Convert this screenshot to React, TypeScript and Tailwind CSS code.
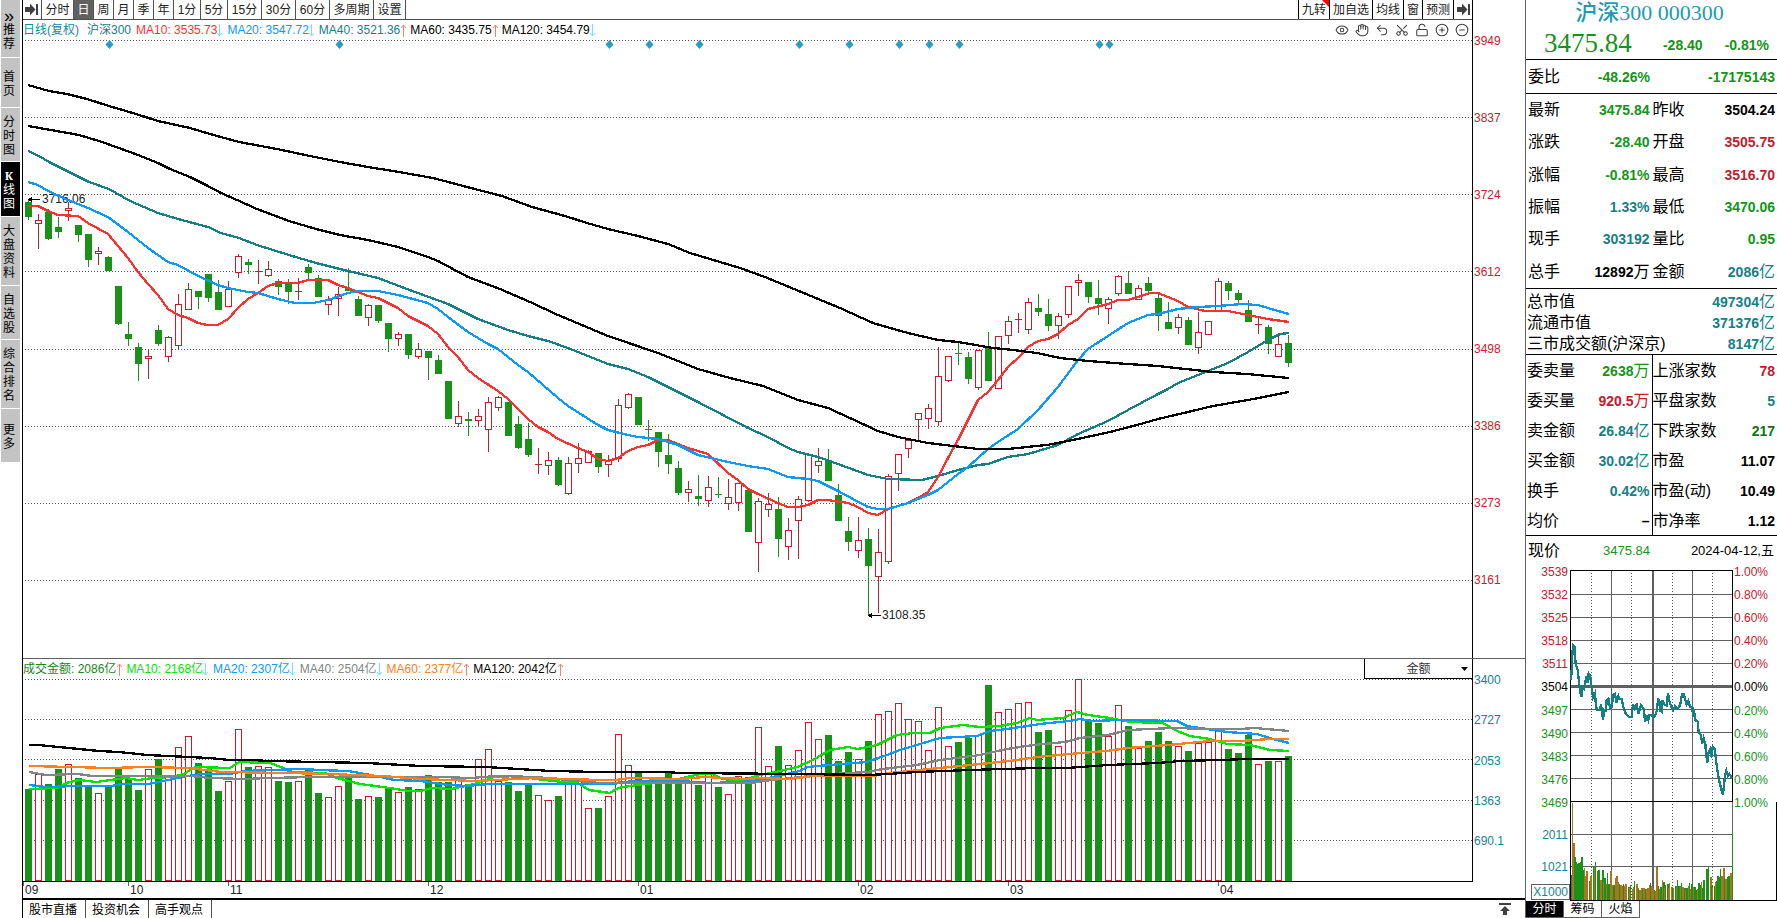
import React from "react";
import { CircleMinus, CirclePlus, Eye, Hand, LockOpen, Scissors, Undo2 } from "lucide-react";

type Candle = [kind: "g" | "r", top: number, bottom: number, high: number, low: number];
type Pt = [number, number];

const GREEN = "#1a921a";
const RED = "#c0202c";

const x0 = 28;
const step = 10;

const candles: Candle[] = [
  ["g", 202, 217, 200, 220], ["r", 220, 224, 214, 249], ["g", 212, 239, 209, 240], ["g", 227, 232, 217, 238],
  ["r", 208, 211, 202, 221], ["g", 225, 235, 225, 242], ["g", 234, 260, 234, 267], ["r", 251, 254, 247, 265],
  ["g", 257, 271, 256, 271], ["g", 286, 324, 286, 325], ["g", 334, 339, 322, 346], ["g", 347, 364, 343, 381],
  ["r", 356, 359, 350, 379], ["g", 330, 344, 325, 346], ["r", 337, 357, 336, 362], ["r", 304, 346, 294, 350],
  ["r", 289, 310, 283, 310], ["g", 291, 297, 291, 309], ["g", 274, 298, 274, 302], ["g", 292, 310, 280, 310],
  ["r", 289, 307, 281, 307], ["r", 256, 273, 254, 278], ["g", 262, 265, 259, 274], ["r", 271, 272, 260, 284],
  ["r", 269, 276, 261, 277], ["g", 281, 287, 279, 295], ["g", 283, 292, 279, 304], ["r", 291, 292, 278, 300],
  ["g", 267, 273, 264, 280], ["g", 278, 297, 275, 297], ["r", 300, 305, 296, 315], ["r", 294, 299, 287, 316],
  ["g", 288, 291, 268, 291], ["g", 299, 316, 296, 316], ["r", 305, 318, 304, 326], ["g", 305, 321, 305, 323],
  ["g", 323, 339, 323, 352], ["r", 334, 339, 332, 346], ["g", 334, 355, 334, 359], ["r", 349, 357, 343, 359],
  ["g", 351, 358, 351, 380], ["g", 360, 374, 355, 374], ["g", 381, 419, 381, 419], ["r", 416, 424, 401, 427],
  ["g", 419, 421, 412, 436], ["r", 416, 421, 409, 427], ["r", 402, 430, 397, 452], ["r", 397, 408, 396, 411],
  ["g", 402, 436, 402, 436], ["g", 424, 448, 416, 449], ["g", 439, 455, 423, 457], ["r", 464, 465, 448, 474],
  ["r", 460, 466, 452, 475], ["g", 460, 485, 457, 486], ["r", 463, 494, 457, 495], ["r", 458, 464, 443, 473],
  ["r", 451, 463, 450, 463], ["g", 453, 467, 453, 473], ["r", 460, 465, 455, 477], ["r", 405, 459, 399, 462],
  ["r", 394, 408, 393, 409], ["g", 397, 425, 397, 425], ["g", 429, 430, 420, 441], ["g", 432, 452, 432, 467],
  ["g", 455, 464, 434, 474], ["g", 468, 493, 461, 495], ["r", 489, 493, 481, 502], ["g", 496, 499, 475, 506],
  ["r", 487, 501, 476, 507], ["g", 494, 495, 477, 498], ["r", 497, 504, 479, 510], ["r", 483, 503, 483, 511],
  ["g", 490, 532, 490, 532], ["r", 501, 543, 498, 572], ["r", 504, 510, 493, 517], ["g", 509, 539, 497, 557],
  ["r", 530, 547, 518, 560], ["r", 499, 521, 496, 559], ["r", 454, 501, 454, 502], ["r", 461, 466, 448, 473],
  ["g", 460, 481, 449, 481], ["g", 495, 521, 484, 521], ["g", 531, 542, 517, 551], ["r", 540, 551, 517, 558],
  ["g", 539, 566, 528, 615], ["r", 552, 577, 529, 613], ["r", 476, 562, 474, 564], ["r", 454, 474, 454, 491],
  ["r", 440, 449, 440, 458], ["r", 413, 420, 413, 440], ["r", 408, 419, 404, 429], ["r", 376, 422, 347, 426],
  ["r", 356, 381, 356, 382], ["g", 353, 354, 343, 365], ["g", 357, 379, 352, 384], ["r", 350, 388, 350, 390],
  ["g", 347, 381, 332, 381], ["r", 336, 389, 336, 389], ["r", 321, 336, 316, 344], ["r", 319, 320, 313, 333],
  ["r", 302, 330, 298, 334], ["g", 308, 312, 294, 316], ["g", 314, 326, 299, 331], ["r", 316, 326, 313, 339],
  ["r", 286, 315, 286, 318], ["r", 280, 283, 274, 296], ["g", 282, 297, 282, 303], ["g", 298, 304, 280, 315],
  ["r", 299, 309, 297, 324], ["r", 276, 294, 275, 296], ["g", 283, 294, 271, 294], ["r", 288, 300, 285, 300],
  ["g", 283, 291, 277, 292], ["g", 298, 316, 294, 331], ["g", 322, 329, 302, 329], ["r", 317, 328, 314, 334],
  ["g", 320, 345, 317, 345], ["r", 332, 348, 312, 354], ["r", 321, 335, 321, 335], ["r", 281, 311, 278, 311],
  ["g", 283, 291, 281, 300], ["g", 293, 300, 290, 304], ["g", 310, 322, 300, 322], ["r", 324, 325, 318, 334],
  ["g", 327, 344, 325, 354], ["r", 344, 357, 333, 357], ["g", 343, 363, 335, 367],
];

const volumeTops: number[] = [
  789, 774, 784, 769, 764, 778, 786, 793, 786, 768, 778, 790, 769, 759, 777, 747, 736, 763, 769, 791,
  781, 729, 767, 766, 767, 781, 782, 781, 769, 793, 797, 786, 775, 799, 796, 797, 787, 792, 787, 789,
  775, 782, 782, 778, 784, 759, 749, 781, 782, 791, 783, 795, 800, 796, 783, 781, 808, 808, 796, 734,
  765, 772, 784, 783, 773, 780, 778, 785, 774, 787, 794, 776, 777, 727, 766, 746, 765, 750, 722, 739,
  735, 761, 752, 759, 741, 714, 711, 703, 719, 721, 750, 707, 746, 742, 738, 735, 685, 712, 709, 703,
  702, 732, 730, 746, 710, 679, 721, 723, 736, 705, 726, 748, 741, 732, 741, 746, 751, 743, 742, 730,
  749, 753, 735, 764, 761, 761, 756,
];

const priceLines: { color: string; pts: Pt[] }[] = [
  {
    color: "#148086",
    pts: [[28, 151], [39, 156], [49, 162], [67, 171], [89, 182], [109, 189], [130, 201], [158, 213], [178, 219], [208, 227], [221, 233], [239, 238], [257, 245], [289, 255], [316, 263], [348, 271], [378, 278], [407, 289], [448, 304], [478, 319], [508, 330], [528, 336], [548, 341], [568, 348], [608, 364], [628, 369], [648, 377], [668, 387], [698, 402], [748, 428], [768, 437], [788, 448], [798, 452], [818, 457], [838, 464], [868, 475], [888, 479], [922, 480], [938, 476], [958, 470], [978, 465], [988, 464], [1008, 457], [1028, 454], [1058, 445], [1078, 434], [1108, 421], [1128, 410], [1158, 394], [1168, 389], [1178, 383], [1208, 371], [1228, 363], [1248, 352], [1268, 340], [1280, 334], [1289, 333]],
  },
  {
    color: "#ff3030",
    pts: [[28, 206], [38, 206], [48, 211], [58, 215], [78, 216], [88, 223], [108, 234], [118, 246], [128, 258], [138, 272], [148, 284], [158, 295], [168, 309], [178, 315], [188, 318], [198, 323], [207, 325], [218, 325], [228, 319], [238, 308], [248, 299], [258, 293], [268, 286], [278, 283], [298, 283], [308, 280], [328, 280], [338, 285], [348, 288], [368, 296], [378, 298], [398, 308], [408, 316], [428, 326], [438, 334], [448, 347], [458, 357], [468, 370], [478, 378], [498, 391], [508, 399], [528, 419], [538, 427], [548, 432], [558, 439], [578, 448], [588, 452], [598, 459], [608, 461], [618, 458], [628, 451], [638, 447], [648, 445], [658, 440], [668, 440], [688, 448], [698, 451], [708, 454], [728, 473], [738, 480], [748, 489], [758, 494], [778, 503], [788, 507], [798, 507], [808, 505], [818, 500], [828, 500], [848, 503], [858, 507], [868, 513], [878, 515], [888, 509], [898, 506], [908, 503], [918, 498], [928, 492], [938, 477], [948, 458], [958, 440], [968, 420], [978, 400], [988, 392], [998, 380], [1008, 367], [1018, 358], [1028, 347], [1038, 341], [1048, 339], [1058, 334], [1068, 325], [1078, 319], [1088, 309], [1108, 304], [1118, 300], [1128, 300], [1138, 297], [1150, 293], [1158, 293], [1178, 301], [1188, 307], [1205, 311], [1228, 311], [1248, 315], [1268, 319], [1289, 322]],
  },
  {
    color: "#0a99ff",
    pts: [[28, 182], [38, 185], [48, 191], [68, 200], [88, 208], [108, 217], [128, 232], [148, 248], [168, 262], [178, 265], [198, 276], [218, 285], [228, 288], [248, 292], [258, 293], [278, 299], [295, 303], [313, 303], [328, 300], [348, 293], [358, 291], [378, 291], [398, 295], [428, 303], [438, 309], [448, 317], [468, 332], [488, 344], [498, 349], [518, 365], [528, 372], [558, 398], [568, 406], [598, 425], [608, 430], [628, 435], [638, 437], [658, 439], [678, 445], [698, 455], [728, 462], [748, 466], [768, 469], [788, 477], [808, 479], [818, 481], [838, 491], [868, 507], [878, 509], [888, 509], [908, 503], [928, 495], [938, 490], [948, 482], [958, 474], [968, 467], [988, 449], [998, 442], [1018, 429], [1038, 410], [1058, 387], [1078, 360], [1088, 349], [1108, 336], [1128, 323], [1148, 315], [1158, 314], [1178, 309], [1198, 307], [1218, 306], [1242, 304], [1258, 305], [1278, 311], [1289, 314]],
  },
  {
    color: "#000",
    pts: [[28, 126], [51, 130], [79, 135], [99, 141], [119, 148], [138, 155], [158, 163], [170, 169], [190, 177], [206, 185], [221, 193], [237, 200], [257, 209], [289, 221], [316, 229], [340, 235], [368, 240], [398, 247], [428, 257], [438, 261], [468, 277], [500, 289], [530, 302], [558, 315], [608, 336], [658, 353], [698, 369], [730, 378], [763, 386], [798, 400], [828, 408], [850, 418], [878, 431], [898, 437], [928, 443], [953, 446], [978, 449], [1008, 449], [1027, 447], [1047, 445], [1063, 442], [1087, 437], [1110, 432], [1137, 425], [1158, 419], [1188, 412], [1213, 406], [1248, 400], [1289, 392]],
  },
  {
    color: "#000",
    pts: [[28, 85], [49, 91], [67, 94], [87, 99], [109, 106], [136, 114], [158, 121], [190, 128], [210, 134], [239, 142], [277, 149], [310, 156], [340, 162], [368, 167], [399, 172], [433, 178], [467, 187], [502, 196], [532, 207], [565, 216], [587, 223], [608, 229], [638, 236], [668, 244], [690, 253], [740, 268], [765, 277], [840, 308], [873, 323], [890, 328], [908, 333], [938, 340], [958, 342], [993, 348], [1013, 350], [1037, 353], [1060, 358], [1088, 361], [1128, 364], [1158, 366], [1213, 372], [1247, 374], [1289, 378]],
  },
];

const volumeLines: { color: string; pts: Pt[] }[] = [
  {
    color: "#00e400",
    pts: [[29, 789], [57, 788], [69, 782], [80, 780], [96, 782], [126, 778], [138, 780], [153, 778], [172, 777], [184, 774], [195, 767], [230, 768], [239, 762], [270, 763], [281, 767], [291, 772], [325, 773], [337, 778], [360, 784], [383, 787], [409, 791], [421, 791], [432, 788], [452, 789], [478, 783], [494, 777], [517, 776], [536, 779], [563, 782], [578, 783], [589, 790], [610, 793], [618, 788], [643, 784], [667, 782], [687, 777], [700, 774], [712, 774], [723, 779], [740, 781], [760, 775], [780, 771], [797, 767], [813, 760], [830, 750], [848, 747], [858, 749], [877, 745], [897, 735], [913, 733], [930, 733], [940, 728], [963, 725], [980, 727], [1000, 726], [1017, 723], [1030, 718], [1037, 720], [1063, 718], [1077, 712], [1088, 715], [1110, 718], [1130, 722], [1163, 723], [1177, 731], [1190, 736], [1210, 739], [1227, 744], [1250, 745], [1270, 750], [1289, 751]],
  },
  {
    color: "#0a99ff",
    pts: [[29, 785], [46, 787], [77, 786], [111, 786], [122, 784], [149, 784], [168, 780], [188, 776], [203, 774], [230, 774], [245, 771], [268, 770], [306, 769], [318, 770], [348, 771], [371, 775], [394, 780], [421, 781], [448, 785], [467, 786], [490, 784], [615, 784], [620, 782], [643, 781], [680, 781], [710, 783], [740, 782], [760, 780], [777, 776], [800, 771], [807, 767], [830, 765], [867, 762], [887, 755], [900, 750], [920, 744], [940, 738], [977, 736], [990, 731], [1007, 729], [1027, 726], [1040, 724], [1070, 721], [1080, 719], [1093, 721], [1120, 720], [1177, 721], [1187, 726], [1207, 729], [1227, 732], [1257, 734], [1273, 739], [1289, 743]],
  },
  {
    color: "#808686",
    pts: [[29, 772], [46, 775], [78, 774], [92, 776], [191, 776], [210, 778], [245, 779], [268, 778], [314, 777], [440, 777], [471, 778], [497, 776], [536, 777], [600, 783], [643, 783], [753, 783], [763, 781], [800, 777], [833, 774], [867, 772], [883, 769], [917, 765], [940, 760], [980, 755], [1007, 749], [1033, 745], [1065, 742], [1080, 738], [1108, 735], [1128, 730], [1173, 728], [1213, 729], [1240, 729], [1255, 728], [1289, 731]],
  },
  {
    color: "#ff8020",
    pts: [[29, 766], [71, 767], [109, 768], [147, 767], [188, 768], [222, 772], [287, 773], [329, 774], [383, 776], [421, 779], [475, 781], [536, 778], [600, 780], [615, 780], [630, 778], [683, 779], [703, 777], [747, 779], [760, 778], [790, 779], [813, 776], [873, 776], [890, 773], [920, 770], [960, 766], [990, 763], [1017, 760], [1037, 757], [1060, 755], [1080, 753], [1107, 751], [1128, 748], [1168, 745], [1210, 741], [1240, 741], [1270, 739], [1289, 739]],
  },
  {
    color: "#000",
    pts: [[29, 745], [38, 745], [69, 748], [99, 751], [119, 752], [147, 755], [189, 757], [209, 758], [230, 760], [253, 760], [268, 761], [367, 763], [421, 766], [486, 767], [551, 771], [600, 772], [668, 772], [678, 773], [800, 774], [868, 775], [888, 774], [917, 772], [970, 770], [1037, 768], [1067, 768], [1108, 765], [1158, 763], [1180, 761], [1220, 760], [1248, 759], [1289, 759]],
  },
];

// Intraday line, in thirds of a pixel from the panel's origin.
const intraday: Pt[] = [
  [183, 420], [185, 390], [187, 345], [189, 315], [193, 318], [197, 372], [203, 390], [207, 425], [210, 455], [215, 470], [218, 440], [222, 445], [226, 425], [229, 408], [232, 428], [236, 400], [240, 405], [245, 440], [249, 473], [255, 460], [258, 500], [262, 510], [270, 510], [273, 492], [276, 515], [279, 540], [283, 510], [288, 512], [290, 480], [295, 475], [300, 505], [306, 500], [309, 465], [315, 462], [320, 488], [325, 468], [328, 478], [335, 478], [340, 500], [347, 520], [355, 530], [365, 530], [369, 493], [374, 505], [380, 494], [385, 522], [393, 495], [402, 508], [405, 545], [411, 530], [415, 540], [418, 525], [425, 525], [430, 533], [437, 524], [441, 510], [444, 478], [448, 480], [450, 512], [455, 515], [458, 480], [463, 493], [470, 497], [474, 460], [478, 482], [484, 500], [489, 512], [495, 498], [500, 506], [508, 500], [512, 488], [516, 462], [521, 462], [526, 480], [530, 493], [535, 482], [540, 500], [547, 500], [549, 530], [553, 520], [556, 540], [563, 545], [566, 575], [572, 585], [577, 610], [581, 595], [586, 612], [588, 640], [592, 668], [596, 635], [600, 628], [605, 652], [608, 620], [614, 625], [618, 660], [622, 690], [627, 720], [631, 735], [634, 748], [639, 765], [642, 735], [645, 708], [649, 692], [654, 708], [658, 702], [662, 708], [667, 715],
];

const turnover =
  "t25 b97 b57 g43 g38 g36 g37 g38 g43 g30 b32 b24 b29 b20 g19 b24 b25 g34 b33 g38 g29 g30 g28 b20 g30 b18 g22 b16 g27 g16 b29 b16 b15 g15 b22 b24 b18 g16 b15 b14 g16 b14 b16 b15 g13 b12 g15 b11 b13 g19 b16 b12 g11 b10 b12 g10 b12 g11 b10 b12 b15 g17 b14 b11 g10 b9 b33 g14 b11 g13 b20 g18 b12 g15 g16 b12 b17 b13 g12 b12 g14 b13 g20 g14 b14 g17 b13 g12 b10 g12 b14 g17 b11 g16 b13 g13 g10 b11 g17 g15 b18 g12 g20 g18 g31 g20 g34 b23 g14 b12 g14 b18 g19 g24 g23 g31 b24 b32 g22 b21 g23 g24 g24 b27".split(" ");

const fillOf: Record<string, string> = { g: GREEN, b: "#ad7420", t: "#148086" };

const toPoints = (pts: Pt[]) => pts.map((p) => p.join(",")).join(" ");

const Lines = ({ lines }: { lines: { color: string; pts: Pt[] }[] }) => (
  <>
    {lines.map((l, i) => (
      <polyline key={i} points={toPoints(l.pts)} fill="none" stroke={l.color} strokeWidth={2.3} />
    ))}
  </>
);

const Grid = ({ ys }: { ys: number[] }) => (
  <>
    {ys.map((y) => (
      <line key={y} x1={25} x2={1472} y1={y + 0.5} y2={y + 0.5} stroke="#555" strokeDasharray="1 2" />
    ))}
  </>
);

function CandleShape({ c, i }: { c: Candle; i: number }) {
  const [kind, top, bottom, high, low] = c;
  const x = x0 + i * step;
  const color = kind === "g" ? GREEN : RED;
  const flat = bottom - top <= 1;
  return (
    <g fill={color}>
      {high < top && <rect x={x} y={high} width={1} height={top - high} />}
      {low > bottom && <rect x={x} y={bottom} width={1} height={low - bottom} />}
      {kind === "g" || flat ? (
        <rect x={x - 3} y={top} width={7} height={bottom - top} />
      ) : (
        <rect x={x - 2.5} y={top + 0.5} width={6} height={bottom - top - 1} fill="#fff" stroke={color} />
      )}
    </g>
  );
}

function PriceChart() {
  return (
    <svg className="block min-h-0 w-full flex-1" viewBox="23 40 1449 618" preserveAspectRatio="none" shapeRendering="crispEdges">
      <Grid ys={[40, 117, 194, 271, 349, 426, 503, 580]} />
      {candles.map((c, i) => (
        <CandleShape key={i} c={c} i={i} />
      ))}
      <g fontFamily="Liberation Sans, sans-serif" fontSize={12} fill="#222">
        <text x={42} y={203}>3716.06</text>
        <text x={882} y={619}>3108.35</text>
      </g>
      <Lines lines={priceLines} />
      <g fill="#000">
        <path d="M28 199h12v1H28zM28 199.500l4-3v6zM868 615h13v1h-13zM868 615.500l4-3v6z" />
      </g>
      <g fill="#2b9cc8" shapeRendering="auto">
        {[109, 339, 609, 649, 699, 799, 849, 899, 929, 959, 1099, 1109].map((x) => (
          <path key={x} d={`M${x + 0.5} 40l4 4.500-4 4.500-4-4.500z`} />
        ))}
      </g>
    </svg>
  );
}

function VolumeChart() {
  return (
    <svg className="block min-h-0 w-full flex-1" viewBox="23 679 1449 202" preserveAspectRatio="none" shapeRendering="crispEdges">
      <Grid ys={[679, 719, 759, 800, 840]} />
      {volumeTops.map((t, i) => {
        const x = x0 + i * step;
        return candles[i][0] === "g" ? (
          <rect key={i} x={x - 3} y={t} width={7} height={881 - t} fill={GREEN} />
        ) : (
          <rect key={i} x={x - 2.5} y={t + 0.5} width={6} height={880 - t} fill="#fff" stroke={RED} />
        );
      })}
      <Lines lines={volumeLines} />
    </svg>
  );
}

function Intraday() {
  const lx = 1570;
  return (
    <svg className="block h-full min-w-0 flex-1" viewBox="1570 564 163 337" preserveAspectRatio="none" shapeRendering="crispEdges">
      <g fill="#606060">
        {[594, 617, 640, 663, 709, 732, 755, 778, 834, 866].map((y) => (
          <rect key={y} x={lx} y={y} width={163} height={1} />
        ))}
        <rect x={lx} y={685} width={163} height={3} />
        <rect x={1611} y={570} width={1} height={330} />
        <rect x={1652} y={570} width={2} height={330} />
        <rect x={1692} y={570} width={1} height={330} />
        <rect x={1732} y={802} width={1} height={98} />
      </g>
      {[1591, 1631, 1672, 1712].map((x) => (
        <line key={x} x1={x + 0.5} x2={x + 0.5} y1={573} y2={900} stroke="#555" strokeDasharray="1 2" />
      ))}
      {turnover.map((t, i) => {
        const h = Number(t.slice(1));
        return <rect key={i} x={1571 + Math.floor(i * 1.3)} y={900 - h} width={i % 3 === 1 ? 1 : 2} height={h} fill={fillOf[t[0]]} />;
      })}
      <rect x={1732} y={831} width={1} height={68} fill={GREEN} />
      <g fill="#000">
        <rect x={lx} y={570} width={163} height={1} />
        <rect x={lx} y={801} width={163} height={1} />
        <rect x={lx} y={570} width={1} height={331} />
        <rect x={1732} y={570} width={1} height={232} />
        <rect x={lx} y={900} width={163} height={1} />
      </g>
      <polyline points={toPoints(intraday.map(([x, y]) => [1510 + x / 3, 540 + y / 3] as Pt))} fill="none" stroke="#148086" strokeWidth={2.3} />
    </svg>
  );
}

const navItems: [string, string, boolean?][] = [
  ["»推荐", "h-[57px]"],
  ["首页", "h-[49px]"],
  ["分时图", "h-[53px]"],
  ["K线图", "h-[54px]", true],
  ["大盘资料", "h-[68px]"],
  ["自选股", "h-[53px]"],
  ["综合排名", "h-[68px]"],
  ["更多", "h-[53px]"],
];

function SideNav() {
  return (
    <nav className="flex w-[22px] shrink-0 flex-col gap-px pr-[2px] pl-px">
      {navItems.map(([label, height, active]) => (
        <button
          key={label}
          className={`${height} flex flex-col items-center justify-center pt-0.5 pr-[3px] text-xs leading-[14px] ${active ? "bg-black text-white" : "bg-[#c3c3c3] text-black"}`}
        >
          {Array.from(label).map((ch, i) => (
            <span key={i} className={ch === "K" ? "font-serif font-bold" : ch === "»" ? "text-lg leading-[14px]" : ""}>
              {ch}
            </span>
          ))}
        </button>
      ))}
    </nav>
  );
}

const ArrowBar = () => (
  <svg width="13" height="13" viewBox="0 0 13 13" fill="#404040">
    <path d="M0 4h5V0.500l5.500 6-5.500 6V9H0zM11 1h2v11h-2z" />
  </svg>
);

const periods: [string, string][] = [
  ["分时", "w-[32px]"], ["日", "w-5"], ["周", "w-5"], ["月", "w-5"], ["季", "w-5"], ["年", "w-5"], ["1分", "w-[27px]"],
  ["5分", "w-[27px]"], ["15分", "w-[34px]"], ["30分", "w-[34px]"], ["60分", "w-[34px]"], ["多周期", "w-11"], ["设置", "w-8"],
];

const tools: [string, string][] = [
  ["九转", "w-[31px]"], ["加自选", "w-[43px]"], ["均线", "w-[31px]"], ["窗", "w-[19px]"], ["预测", "w-[31px]"],
];

function Toolbar() {
  return (
    <div className="flex h-5 shrink-0 justify-between border-b border-[#505050] text-xs text-[#222]">
      <div className="flex">
        <button aria-label="收起" className="flex w-[18px] items-center justify-end pr-[3px]">
          <ArrowBar />
        </button>
        {periods.map(([label, w]) => (
          <button
            key={label}
            className={`${w} border-l border-[#505050] pt-px text-center whitespace-nowrap last:w-[33px] last:border-r ${label === "日" ? "bg-[#606060] text-white" : ""}`}
          >
            {label}
          </button>
        ))}
      </div>
      <div className="flex">
        {tools.map(([label, w], i) => (
          <button key={label} className={`${w} relative border-l border-black pt-px text-center whitespace-nowrap`}>
            {label}
            {i === 0 && (
              <svg className="absolute top-0 right-0" width="7" height="7" viewBox="0 0 7 7">
                <path d="M0 0h7v7z" fill="#f00" />
              </svg>
            )}
          </button>
        ))}
        <button aria-label="展开" className="flex w-[19px] items-center justify-center border-l border-black">
          <ArrowBar />
        </button>
      </div>
    </div>
  );
}

const Trend = ({ up }: { up: boolean }) => (
  <svg width="6" height="13" viewBox="0 0 6 13" fill="none" stroke={up ? "#ff8068" : "#6ee6f6"} className={up ? "" : "rotate-180"}>
    <path d="M3.500 1v12M1 4l2.500-3L6 4" />
  </svg>
);

const priceLegend: [string, string, boolean][] = [
  ["MA10: 3535.73", "text-[#ff3030]", false],
  ["MA20: 3547.72", "text-[#0a99ff]", false],
  ["MA40: 3521.36", "text-[#148086]", true],
  ["MA60: 3435.75", "text-black", true],
  ["MA120: 3454.79", "text-black", false],
];

const volumeLegend: [string, string, boolean][] = [
  ["成交金额: 2086亿", "text-[#1a851a]", true],
  ["MA10: 2168亿", "text-[#00e400]", false],
  ["MA20: 2307亿", "text-[#0a99ff]", false],
  ["MA40: 2504亿", "text-[#808686]", false],
  ["MA60: 2377亿", "text-[#ff8020]", true],
  ["MA120: 2042亿", "text-black", true],
];

const Legend = ({ items }: { items: [string, string, boolean][] }) => (
  <>
    {items.map(([text, cls, up]) => (
      <span key={text} className={`flex items-center ${cls}`}>
        {text}
        <Trend up={up} />
      </span>
    ))}
  </>
);

const chartTools = [
  { name: "显示", Icon: Eye, cls: "" },
  { name: "拖动", Icon: Hand, cls: "" },
  { name: "撤销", Icon: Undo2, cls: "" },
  { name: "剪切", Icon: Scissors, cls: "-rotate-90" },
  { name: "锁定", Icon: LockOpen, cls: "" },
  { name: "放大", Icon: CirclePlus, cls: "" },
  { name: "缩小", Icon: CircleMinus, cls: "" },
];

const months: string[] = ["09", "10", "11", "12", "01", "02", "03", "04"];

function ChartArea() {
  return (
    <main className="flex min-w-0 flex-1 flex-col border-l border-black">
      <section className="flex min-h-0 flex-1 border-b border-[#606060]">
        <div className="flex min-w-0 flex-1 flex-col border-r border-black">
          <Toolbar />
          <div className="flex h-5 shrink-0 items-center justify-between text-xs whitespace-nowrap">
            <div className="flex gap-1">
              <span className="text-[#148c9c]">日线(复权)</span>
              <span className="pr-px pl-1 text-[#148086]">沪深300</span>
              <Legend items={priceLegend} />
            </div>
            <div className="flex gap-1.5 pr-[3px] text-[#404040]">
              {chartTools.map(({ name, Icon, cls }) => (
                <button key={name} aria-label={name}>
                  <Icon size={14} strokeWidth={1.8} className={cls} />
                </button>
              ))}
            </div>
          </div>
          <PriceChart />
        </div>
        <div className="flex w-[52px] shrink-0 flex-col justify-between pt-[33px] pb-[70px] pl-px text-xs leading-4 text-[#c8202c]">
          {["3949", "3837", "3724", "3612", "3498", "3386", "3273", "3161"].map((v) => (
            <span key={v}>{v}</span>
          ))}
        </div>
      </section>

      <section className="flex h-[223px] shrink-0">
        <div className="flex min-w-0 flex-1 flex-col border-r border-b border-black">
          <div className="flex h-5 shrink-0 justify-between text-xs whitespace-nowrap">
            <div className="flex items-center gap-1">
              <Legend items={volumeLegend} />
            </div>
            <div className="relative flex h-5 w-[108px] border-b border-l border-black">
              <select aria-label="指标" className="w-full appearance-none bg-white px-4 text-center text-xs text-[#333] outline-none">
                <option>金额</option>
              </select>
              <svg className="pointer-events-none absolute top-2 right-1" width="7" height="4" viewBox="0 0 7 4">
                <path d="M0 0h7L3.500 4z" />
              </svg>
            </div>
          </div>
          <VolumeChart />
        </div>
        <div className="flex w-[52px] shrink-0 flex-col justify-between pt-[13px] pb-[33px] pl-px text-xs leading-4 text-[#148496]">
          {["3400", "2727", "2053", "1363", "690.1"].map((v) => (
            <span key={v}>{v}</span>
          ))}
        </div>
      </section>

      <div className="mr-[53px] grid h-4 shrink-0 grid-cols-[105fr_100fr_200fr_210fr_220fr_150fr_210fr_254fr] text-xs leading-4 text-[#222]">
        {months.map((m) => (
          <div key={m} className="flex gap-px">
            <i className="h-1 w-px bg-[#606060]" />
            <span>{m}</span>
          </div>
        ))}
      </div>

      <footer className="flex h-5 shrink-0 items-stretch justify-between border-t-2 border-black text-xs">
        <div className="flex">
          {["股市直播", "投资机会", "高手观点"].map((t) => (
            <button key={t} className="w-[63px] border-r border-[#505050] pt-px pr-0.5 text-center whitespace-nowrap">
              {t}
            </button>
          ))}
        </div>
        <button aria-label="置顶" className="flex w-10 items-center justify-center">
          <svg width="12" height="12" viewBox="0 0 12 12" fill="#404040">
            <path d="M0 0h12v2H0zM6 3l5 5H8v4H4V8H1z" />
          </svg>
        </button>
      </footer>
    </main>
  );
}

const G = "text-[#15941a]";
const R = "text-[#c0202c]";
const T = "text-[#148086]";
const K = "text-black";

type Field = [label: string, value: string, unit: string, color: string];

const quotes: Field[] = [
  ["最新", "3475.84", "", G], ["昨收", "3504.24", "", K],
  ["涨跌", "-28.40", "", G], ["开盘", "3505.75", "", R],
  ["涨幅", "-0.81%", "", G], ["最高", "3516.70", "", R],
  ["振幅", "1.33%", "", T], ["最低", "3470.06", "", G],
  ["现手", "303192", "", T], ["量比", "0.95", "", G],
  ["总手", "12892", "万", K], ["金额", "2086", "亿", T],
];

const caps: Field[] = [
  ["总市值", "497304", "亿", T],
  ["流通市值", "371376", "亿", T],
  ["三市成交额(沪深京)", "8147", "亿", T],
];

const stats: Field[] = [
  ["委卖量", "2638", "万", G], ["上涨家数", "78", "", R],
  ["委买量", "920.5", "万", R], ["平盘家数", "5", "", T],
  ["卖金额", "26.84", "亿", T], ["下跌家数", "217", "", "text-[#147014]"],
  ["买金额", "30.02", "亿", T], ["市盈", "11.07", "", K],
  ["换手", "0.42%", "", T], ["市盈(动)", "10.49", "", K],
  ["均价", "–", "", K], ["市净率", "1.12", "", K],
];

const Cell = ({ f, className = "" }: { f: Field; className?: string }) => (
  <div className={`flex items-center justify-between pr-0.5 ${className}`}>
    <dt className="text-base leading-5 whitespace-nowrap">{f[0]}</dt>
    <dd className={`flex items-center text-sm leading-5 font-bold ${f[3]}`}>
      {f[1]}
      {f[2] && <span className="text-base leading-5 font-normal">{f[2]}</span>}
    </dd>
  </div>
);

const priceTicks = ["3539", "3532", "3525", "3518", "3511", "3504", "3497", "3490", "3483", "3476", "3469"];
const pctTicks = ["1.00%", "0.80%", "0.60%", "0.40%", "0.20%", "0.00%", "0.20%", "0.40%", "0.60%", "0.80%", "1.00%"];
const tickColor = (i: number) => (i < 5 ? R : i === 5 ? K : G);

function QuotePanel() {
  return (
    <aside className="flex w-[252px] shrink-0 flex-col border-l border-[#606060]">
      <header className="h-[60px] shrink-0 border-b border-black">
        <h1 className="flex h-[26px] items-center justify-center pr-1 font-[Liberation_Serif,Noto_Sans_CJK_SC,serif] text-[22px] leading-6 font-medium text-[#1c9cb0]">
          沪深300 000300
        </h1>
        <div className="flex h-[33px] items-center justify-between pr-2 pl-[18px] text-sm font-bold text-[#15941a]">
          <span className="font-[Liberation_Serif,serif] text-[27px] leading-8 font-normal">3475.84</span>
          <span className="flex gap-[22px] pt-1">
            <span>-28.40</span>
            <span>-0.81%</span>
          </span>
        </div>
      </header>
      <dl className="flex h-[34px] shrink-0 items-center border-b border-black pr-0.5">
        <Cell f={["委比", "-48.26%", "", G]} className="w-[126px] pl-0.5" />
        <dd className="flex-1 text-right text-sm font-bold text-[#15941a]">-17175143</dd>
      </dl>
      <dl className="grid h-[195px] shrink-0 auto-rows-fr grid-cols-2 border-b border-black">
        {quotes.map((f, i) => (
          <Cell key={f[0]} f={f} className={i % 2 ? "pl-px" : "pl-0.5"} />
        ))}
      </dl>
      <dl className="grid h-[66px] shrink-0 auto-rows-fr border-b border-black pt-0.5">
        {caps.map((f) => (
          <Cell key={f[0]} f={f} className="pl-px" />
        ))}
      </dl>
      <dl className="grid h-[181px] shrink-0 auto-rows-fr grid-cols-2 border-b border-black">
        {stats.map((f, i) => (
          <Cell key={f[0]} f={f} className={i % 2 ? "border-l border-black pt-0.5" : "pt-0.5 pl-px"} />
        ))}
      </dl>
      <div className="flex h-7 shrink-0 items-center pt-0.5 pr-[3px] pl-0.5 text-[13px]">
        <span className="text-base leading-5">现价</span>
        <span className="w-[90px] text-right text-[#15941a]">3475.84</span>
        <span className="flex-1 text-right">2024-04-12,五</span>
      </div>
      <div className="flex h-[337px] shrink-0 text-xs leading-[14px]">
        <div className="flex w-11 flex-col items-end pt-px">
          <div className="flex h-[245px] flex-col items-end justify-between pr-0.5">
            {priceTicks.map((t, i) => (
              <span key={i} className={tickColor(i)}>{t}</span>
            ))}
          </div>
          <span className="mt-[18px] pr-0.5 text-[#148496]">2011</span>
          <span className="mt-[18px] pr-0.5 text-[#148496]">1021</span>
          <span className="mt-2.5 h-4 border border-[#606060] px-px text-[#148496]">X1000</span>
        </div>
        <Intraday />
        <div className="flex w-11 flex-col pt-px">
          <div className="flex h-[245px] flex-col justify-between pl-px">
            {pctTicks.map((t, i) => (
              <span key={i} className={tickColor(i)}>{t}</span>
            ))}
          </div>
          <div className="-mt-2 flex-1 border-r border-b border-black" />
        </div>
      </div>
      <div className="flex h-[17px] shrink-0 text-xs leading-4">
        {["分时", "筹码", "火焰"].map((t, i) => (
          <button key={t} className={`w-[38px] border-r border-b border-[#606060] text-center ${i === 0 ? "bg-black text-white" : ""}`}>
            {t}
          </button>
        ))}
      </div>
    </aside>
  );
}

export default function App() {
  return (
    <div className="flex h-screen min-h-[700px] overflow-hidden bg-white font-[Liberation_Sans,Noto_Sans_CJK_SC,sans-serif] text-black">
      <SideNav />
      <ChartArea />
      <QuotePanel />
    </div>
  );
}
